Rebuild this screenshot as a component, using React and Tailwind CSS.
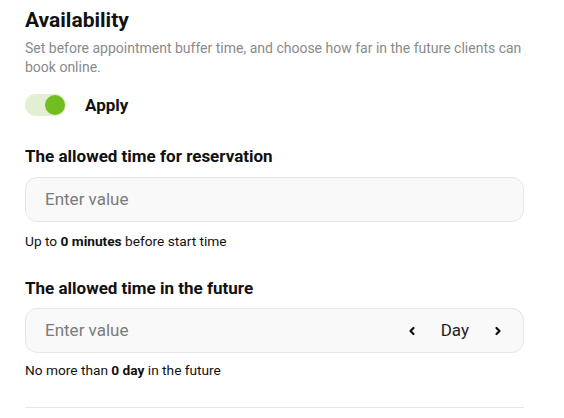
import React from "react";

export default function App() {
  return (
    <div className="w-[564px] h-[418px] bg-white overflow-hidden font-['Roboto',sans-serif] text-[#111]">
      <div className="pl-[25px] pr-[40px] pt-[6px]">
        <h1 className="text-[21px] font-bold leading-[28px] text-[#111]">Availability</h1>
        <p className="mt-[5px] text-[14px] leading-[19px] text-[#8a8a8a]">
          Set before appointment buffer time, and choose how far in the future clients can book online.
        </p>
        <div className="mt-[17px] flex items-center gap-[19px]">
          <div className="w-[41px] h-[22px] rounded-full bg-[#e2efd3] flex items-center justify-end pr-[1px]">
            <div className="w-[20px] h-[20px] rounded-full bg-[#72bd1f]" />
          </div>
          <span className="text-[17px] font-bold leading-[22px]">Apply</span>
        </div>

        <h2 className="mt-[29px] text-[17px] font-bold leading-[22px]">The allowed time for reservation</h2>
        <div className="mt-[10px] h-[45px] rounded-[12px] border border-[#e6e6e6] bg-[#f9f9f9] flex items-center px-[19px]">
          <span className="text-[17px] text-[#7b7b7b]">Enter value</span>
        </div>
        <p className="mt-[10px] text-[13.7px] leading-[19px] text-[#111]">
          Up to <b className="font-bold">0 minutes</b> before start time
        </p>

        <h2 className="mt-[26px] text-[17px] font-bold leading-[22px]">The allowed time in the future</h2>
        <div className="mt-[9px] h-[45px] rounded-[12px] border border-[#e6e6e6] bg-[#f9f9f9] flex items-center pl-[19px] pr-[20px]">
          <span className="text-[17px] text-[#7b7b7b] flex-1">Enter value</span>
          <div className="flex items-center">
            <svg width="10" height="10" viewBox="0 0 10 10" className="mr-[24px]">
              <path d="M6.5 2 L3.5 5 L6.5 8" fill="none" stroke="#111" strokeWidth="2.2" strokeLinecap="round" strokeLinejoin="round" />
            </svg>
            <span className="text-[17px] text-[#222]">Day</span>
            <svg width="10" height="10" viewBox="0 0 10 10" className="ml-[24px]">
              <path d="M3.5 2 L6.5 5 L3.5 8" fill="none" stroke="#111" strokeWidth="2.2" strokeLinecap="round" strokeLinejoin="round" />
            </svg>
          </div>
        </div>
        <p className="mt-[8px] text-[13.7px] leading-[19px] text-[#111]">
          No more than <b className="font-bold">0 day</b> in the future
        </p>
        <div className="mt-[27px] h-px bg-[#e5e5e5]" />
      </div>
    </div>
  );
}
